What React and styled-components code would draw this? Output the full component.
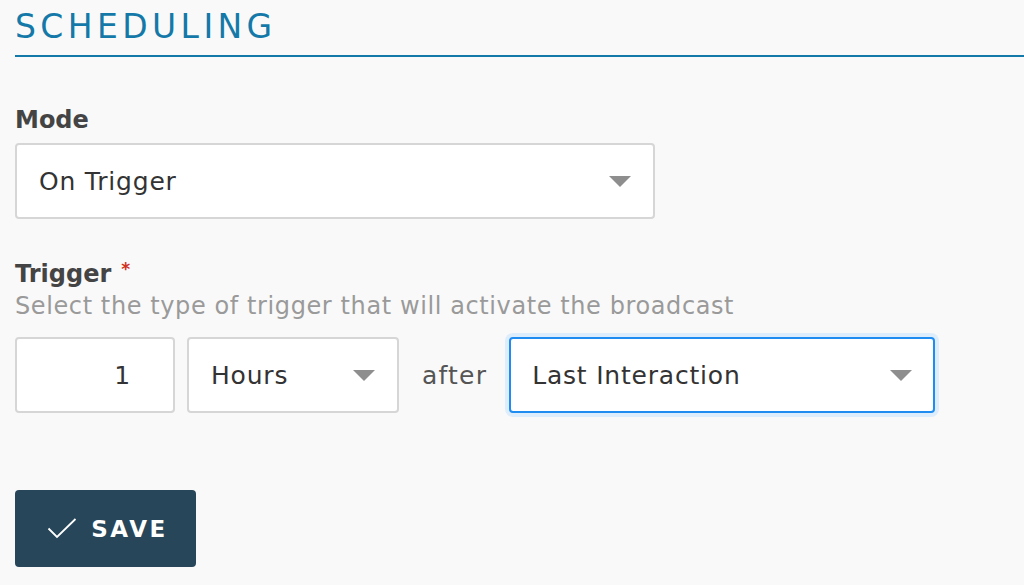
import styled, { createGlobalStyle } from "styled-components";

const GlobalStyle = createGlobalStyle`
  html, body {
    margin: 0;
    padding: 0;
    background: #f9f9f9;
  }
  body {
    font-family: "DejaVu Sans", "Noto Sans", sans-serif;
    color: #3d3d3d;
  }
`;

const Page = styled.div`
  padding: 0 0 0 15px;
  width: 1009px;
`;

const SectionTitle = styled.h2`
  margin: 0;
  height: 57px;
  box-sizing: border-box;
  padding-top: 5px;
  font-size: 33px;
  line-height: 44px;
  font-weight: 400;
  letter-spacing: 4.4px;
  color: #1479a8;
  border-bottom: 2px solid #1479a8;
`;

const Field = styled.div`
  margin-top: ${(p) => p.top}px;
`;

const Label = styled.div`
  font-size: 24px;
  line-height: 32px;
  font-weight: 700;
  color: #444;
  margin-bottom: ${(p) => p.gap || 0}px;
`;

const Required = styled.span`
  color: #d0301c;
  font-size: 17px;
  margin-left: 10px;
  vertical-align: 7px;
`;

const Help = styled.div`
  font-size: 24px;
  line-height: 32px;
  letter-spacing: 0.6px;
  color: #9a9a9a;
  margin-bottom: 15px;
`;

const Row = styled.div`
  display: flex;
  align-items: center;
`;

const Box = styled.div`
  box-sizing: border-box;
  width: ${(p) => p.w}px;
  height: 76px;
  background: #fff;
  border: ${(p) => (p.focused ? "2px solid #1f8cf2" : "2px solid #d6d6d6")};
  box-shadow: ${(p) => (p.focused ? "0 0 0 4px #deedfb" : "none")};
  border-radius: 4px;
  display: flex;
  align-items: center;
  padding: 0 ${(p) => (p.focused ? 21 : 22)}px;
  font-size: 25px;
  letter-spacing: 0.8px;
  color: #333;
  margin-right: ${(p) => p.mr || 0}px;
`;

const Value = styled.span`
  flex: 1;
  text-align: ${(p) => p.align || "left"};
`;

const Caret = styled.span`
  width: 0;
  height: 0;
  border-left: 11px solid transparent;
  border-right: 11px solid transparent;
  border-top: 11px solid #8e8e8e;
  margin-left: 12px;
`;

const After = styled.span`
  font-size: 25px;
  letter-spacing: 1.2px;
  color: #555;
  margin-right: 22px;
  margin-left: 23px;
`;

const SaveButton = styled.button`
  margin-top: 77px;
  width: 181px;
  height: 77px;
  border: none;
  border-radius: 4px;
  background: #27465a;
  color: #fff;
  display: flex;
  align-items: center;
  justify-content: center;
  gap: 14px;
  font-family: inherit;
  font-size: 23px;
  font-weight: 700;
  letter-spacing: 2.6px;
  padding: 0 0 0 4px;
`;

function Select({ value, width, focused, mr }) {
  return (
    <Box w={width} focused={focused} mr={mr}>
      <Value>{value}</Value>
      <Caret />
    </Box>
  );
}

export default function App() {
  return (
    <>
      <GlobalStyle />
      <Page>
        <SectionTitle>SCHEDULING</SectionTitle>
        <Field top={47}>
          <Label gap={7}>Mode</Label>
          <Select value="On Trigger" width={640} />
        </Field>
        <Field top={34}>
          <Label>
            Trigger<Required>*</Required>
          </Label>
          <Help>Select the type of trigger that will activate the broadcast</Help>
          <Row>
            <Box w={160} mr={12}>
              <Value align="right">1</Value>
              <span style={{ width: 20 }} />
            </Box>
            <Select value="Hours" width={212} mr={0} />
            <After>after</After>
            <Select value="Last Interaction" width={426} focused />
          </Row>
        </Field>
        <SaveButton>
          <svg width="30" height="21" viewBox="0 0 30 21" fill="none">
            <path d="M1.5 10.5 L10 19 L28.5 1" stroke="#fff" strokeWidth="1.8" />
          </svg>
          SAVE
        </SaveButton>
      </Page>
    </>
  );
}
